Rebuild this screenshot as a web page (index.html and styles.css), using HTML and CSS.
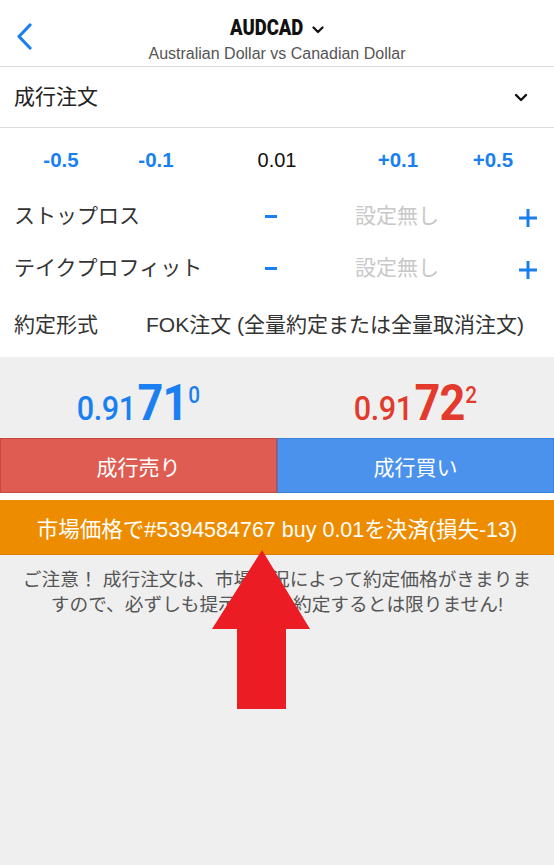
FILE: index.html
```html
<!DOCTYPE html>
<html lang="ja">
<head>
<meta charset="utf-8">
<title>AUDCAD</title>
<link rel="stylesheet" href="styles.css">
</head>
<body>
<div class="page">
  <header class="header">
    <div class="back">
      <svg width="18" height="28" viewBox="0 0 18 28"><path d="M14 2 L3 13.5 L14 25" fill="none" stroke="#1a7ff0" stroke-width="3.2" stroke-linecap="round" stroke-linejoin="round"/></svg>
    </div>
    <div class="titles">
      <div class="title-line"><span class="symbol">AUDCAD</span><svg class="title-chev" width="12" height="8" viewBox="0 0 12 8"><path d="M1.5 1.5 L6 6 L10.5 1.5" fill="none" stroke="#111" stroke-width="2.2" stroke-linecap="round" stroke-linejoin="round"/></svg></div>
      <div class="subtitle">Australian Dollar vs Canadian Dollar</div>
    </div>
    <div></div>
  </header>

  <div class="order-type">
    <span>成行注文</span>
    <svg width="14" height="9" viewBox="0 0 14 9"><path d="M2 2 L7 7 L12 2" fill="none" stroke="#111" stroke-width="2.4" stroke-linecap="round" stroke-linejoin="round"/></svg>
  </div>

  <div class="lot-row">
    <span class="step">-0.5</span>
    <span class="step">-0.1</span>
    <span class="lot">0.01</span>
    <span class="step">+0.1</span>
    <span class="step">+0.5</span>
  </div>

  <div class="set-row">
    <span class="label">ストップロス</span>
    <span class="minus"></span>
    <span class="none">設定無し</span>
    <span class="plus"><svg width="20" height="20" viewBox="0 0 20 20"><path d="M10 1 V19 M1 10 H19" stroke="#1a7ff0" stroke-width="3"/></svg></span>
  </div>

  <div class="set-row">
    <span class="label">テイクプロフィット</span>
    <span class="minus"></span>
    <span class="none">設定無し</span>
    <span class="plus"><svg width="20" height="20" viewBox="0 0 20 20"><path d="M10 1 V19 M1 10 H19" stroke="#1a7ff0" stroke-width="3"/></svg></span>
  </div>

  <div class="exec-row">
    <span class="label">約定形式</span>
    <span class="exec-val">FOK注文 (全量約定または全量取消注文)</span>
  </div>

  <div class="prices">
    <div class="price-cell"><span class="price blue"><span class="p-small">0.91</span><span class="p-big">71</span><span class="p-sup">0</span></span></div>
    <div class="price-cell"><span class="price red"><span class="p-small">0.91</span><span class="p-big">72</span><span class="p-sup">2</span></span></div>
  </div>

  <div class="buttons">
    <div class="btn sell">成行売り</div>
    <div class="btn buy">成行買い</div>
  </div>

  <div class="gap"></div>

  <div class="close-bar">市場価格で#5394584767 buy 0.01を決済(損失-13)</div>

  <p class="note">ご注意！ 成行注文は、市場状況によって約定価格がきまりま<br>すので、必ずしも提示価格で約定するとは限りません!</p>

  <svg class="arrow" width="98" height="160" viewBox="0 0 98 160"><polygon points="50,0 98,79 74,79 74,159 25,159 25,79 0,79" fill="#ec1c24"/></svg>
</div>
</body>
</html>
```

FILE: styles.css
```css
* { box-sizing: border-box; }

html, body {
  margin: 0;
  padding: 0;
}

body {
  background: #efefef;
  font-family: "Liberation Sans", "Noto Sans CJK JP", sans-serif;
  color: #333;
}

.page {
  position: relative;
  width: 554px;
  min-height: 865px;
  background: #efefef;
}

.header {
  height: 67px;
  background: #fff;
  border-bottom: 1px solid #dcdcdc;
  display: grid;
  grid-template-columns: 60px 1fr 60px;
}

.back {
  padding: 23px 0 0 16px;
}

.titles {
  display: flex;
  flex-direction: column;
  align-items: center;
  padding-top: 15px;
}

.title-line {
  display: flex;
  align-items: center;
  gap: 0;
  height: 26px;
}

.symbol {
  font-family: Roboto, "Liberation Sans", sans-serif;
  font-weight: 900;
  font-size: 22px;
  line-height: 26px;
  color: #111;
  display: inline-block;
  transform: scaleX(0.84);
  transform-origin: center center;
  margin: 0 -7px;
}

.title-chev {
  margin-top: 3px;
  margin-left: 9px;
}

.subtitle {
  margin-top: 4px;
  font-size: 16px;
  line-height: 18px;
  color: #555;
}

.order-type {
  height: 61px;
  background: #fff;
  border-bottom: 1px solid #dcdcdc;
  display: flex;
  align-items: center;
  justify-content: space-between;
  padding: 0 26px 0 14px;
  font-size: 21px;
  line-height: 26px;
  color: #222;
}

.lot-row {
  height: 62px;
  background: #fff;
  display: grid;
  grid-template-columns: 96px 94px 148px 94px 96px;
  padding-left: 13px;
  align-items: center;
}

.lot-row span {
  text-align: center;
  line-height: 24px;
  padding-top: 2px;
}

.step {
  color: #1a7ff0;
  font-weight: 700;
  font-size: 20.5px;
}

.lot {
  color: #111;
  font-size: 20px;
}

.set-row {
  height: 52px;
  background: #fff;
  display: grid;
  grid-template-columns: 236px 42px 210px 1fr;
  padding-left: 14px;
  align-items: center;
}

.label {
  font-size: 21px;
  line-height: 26px;
  color: #333;
  white-space: nowrap;
}

.minus {
  justify-self: center;
  width: 12px;
  height: 3px;
  background: #1a7ff0;
}

.none {
  text-align: center;
  font-size: 21px;
  line-height: 26px;
  color: #c8c8c8;
}

.plus {
  justify-self: center;
  display: flex;
  margin-top: 4px;
}

.exec-row {
  height: 63px;
  background: #fff;
  display: flex;
  align-items: center;
  padding-left: 14px;
  padding-bottom: 1px;
}

.exec-val {
  margin-left: 48px;
  font-size: 21px;
  line-height: 26px;
  color: #333;
  white-space: nowrap;
}

.prices {
  height: 81px;
  display: grid;
  grid-template-columns: 1fr 1fr;
}

.price-cell {
  display: flex;
  justify-content: center;
  align-items: flex-end;
  padding-bottom: 10px;
}

.price {
  font-family: Roboto, "Liberation Sans", sans-serif;
  display: inline-block;
  transform: scaleX(0.9);
  white-space: nowrap;
  line-height: 1;
}

.blue { color: #1a7ff0; }
.red { color: #e23a2c; }

.p-small {
  font-size: 34px;
  font-weight: 500;
  margin-right: 2px;
  letter-spacing: -0.5px;
}

.p-big {
  font-size: 50px;
  font-weight: 700;
  margin-right: 1px;
  letter-spacing: -1px;
}

.p-sup {
  font-size: 23px;
  font-weight: 500;
  vertical-align: 17px;
}

.buttons {
  height: 55px;
  display: grid;
  grid-template-columns: 277px 277px;
}

.btn {
  display: flex;
  align-items: center;
  justify-content: center;
  font-size: 21px;
  color: #fff;
}

.sell {
  background: #de5c51;
  border: 1px solid #c8483e;
}

.buy {
  background: #4b92ec;
  border: 1px solid #3a80da;
}

.gap {
  height: 7px;
  background: #fff;
}

.close-bar {
  height: 55px;
  background: #ee8c00;
  border-bottom: 1px solid #d97f00;
  display: flex;
  align-items: center;
  justify-content: center;
  font-size: 21.5px;
  color: #fff;
  white-space: nowrap;
}

.note {
  margin: 0;
  padding-top: 12px;
  text-align: center;
  font-size: 18.7px;
  line-height: 25px;
  color: #555;
}

.arrow {
  position: absolute;
  left: 212px;
  top: 550px;
}
```
